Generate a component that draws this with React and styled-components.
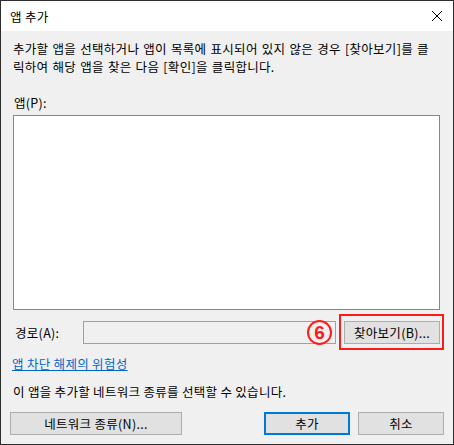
import React from 'react'
import styled, { createGlobalStyle } from 'styled-components'

const GlobalStyle = createGlobalStyle`
    html, body {
        margin: 0;
        padding: 0;
        background: #ffffff;
    }
    body {
        font-family: "Noto Sans CJK KR", "Noto Sans", sans-serif;
        font-size: 12.5px;
        letter-spacing: 0.3px;
        color: #000;
    }
`

const Window = styled.div`
    position: relative;
    width: 454px;
    height: 445px;
    box-sizing: border-box;
    border: 1px solid #2d2d2d;
    background-color: #f0f0f0;
    display: flex;
    flex-direction: column;
`

const TitleBar = styled.div`
    height: 30px;
    background-color: #ffffff;
    display: flex;
    align-items: center;
    justify-content: space-between;
    padding: 0 9px 0 9px;
`

const CloseButton = styled.div`
    width: 14px;
    height: 14px;
    display: flex;
    align-items: center;
    justify-content: center;
`

const Body = styled.div`
    flex: 1;
    display: flex;
    flex-direction: column;
    padding: 9px 9px 0 12px;
`

const Text = styled.div`
    line-height: 18px;
    margin-top: ${(p) => p.top || 0}px;
    padding-left: ${(p) => p.left || 0}px;
    word-spacing: ${(p) => p.wordGap || 0}px;
`

const ListBox = styled.div`
    margin-top: 3px;
    width: 427px;
    height: 195px;
    box-sizing: border-box;
    border: 1px solid #828790;
    background-color: #ffffff;
`

const PathRow = styled.div`
    position: relative;
    display: flex;
    align-items: center;
    margin-top: 11px;
    height: 23px;
`

const PathLabel = styled.div`
    width: 70px;
    box-sizing: border-box;
    padding-left: 2px;
`

const PathInput = styled.div`
    width: 253px;
    height: 23px;
    box-sizing: border-box;
    border: 1px solid #a0a0a0;
    background-color: #f0f0f0;
`

const Button = styled.div`
    width: ${(p) => p.w}px;
    height: 23px;
    box-sizing: border-box;
    margin-left: ${(p) => p.gap || 0}px;
    border: ${(p) => (p.primary ? '2px solid #0078d7' : '1px solid #adadad')};
    background-color: #e1e1e1;
    display: flex;
    align-items: center;
    justify-content: center;
`

const Highlight = styled.div`
    position: absolute;
    left: 326px;
    top: -7px;
    width: 105px;
    height: 36px;
    box-sizing: border-box;
    border: 2px solid #ff1a1a;
`

const StepMark = styled.div`
    position: absolute;
    left: 294px;
    top: -1px;
    width: 25px;
    height: 25px;
    box-sizing: border-box;
    border: 2px solid #ff1a1a;
    border-radius: 50%;
    color: #ff1a1a;
    font-family: "Liberation Sans", Arial, sans-serif;
    font-weight: bold;
    font-size: 19px;
    letter-spacing: 0;
    line-height: 21px;
    text-align: center;
`

const Link = styled.a`
    margin-top: 11px;
    line-height: 18px;
    color: #0066cc;
    text-decoration: underline;
    margin-left: -1px;
    width: max-content;
`

const Footer = styled.div`
    display: flex;
    margin-top: 11px;
    margin-left: -3px;
`

const Spacer = styled.div`
    flex: 1;
`

const App = () => {
  return (
    <>
      <GlobalStyle />
      <Window>
        <TitleBar>
          <span>앱 추가</span>
          <CloseButton>
            <svg width="12" height="12" viewBox="0 0 12 12">
              <path d="M1 1 L11 11 M11 1 L1 11" stroke="#000" strokeWidth="1" />
            </svg>
          </CloseButton>
        </TitleBar>
        <Body>
          <Text wordGap={1}>
            추가할 앱을 선택하거나 앱이 목록에 표시되어 있지 않은 경우 [찾아보기]를 클
            <br />
            릭하여 해당 앱을 찾은 다음 [확인]을 클릭합니다.
          </Text>
          <Text top={18} left={1}>앱(P):</Text>
          <ListBox />
          <PathRow>
            <PathLabel>경로(A):</PathLabel>
            <PathInput />
            <Button w={96} gap={8}>찾아보기(B)...</Button>
            <StepMark>6</StepMark>
            <Highlight />
          </PathRow>
          <Link>앱 차단 해제의 위험성</Link>
          <Text top={10}>이 앱을 추가할 네트워크 종류를 선택할 수 있습니다.</Text>
          <Footer>
            <Button w={172}>네트워크 종류(N)...</Button>
            <Spacer />
            <Button w={86} primary>추가</Button>
            <Button w={86} gap={8}>취소</Button>
          </Footer>
        </Body>
      </Window>
    </>
  )
}

export default App
